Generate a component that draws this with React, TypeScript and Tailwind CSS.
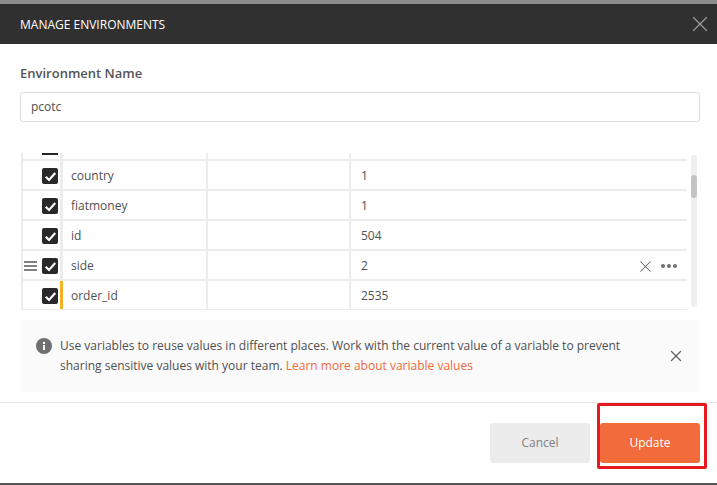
import { X } from 'lucide-react';

const rows = [
  { key: 'country', value: '1' },
  { key: 'fiatmoney', value: '1' },
  { key: 'id', value: '504' },
  { key: 'side', value: '2', hover: true },
  { key: 'order_id', value: '2535', changed: true },
];

function CheckBox() {
  return (
    <span className="flex h-4 w-4 items-center justify-center rounded-[2px] bg-[#282828]">
      <svg width="13" height="13" viewBox="0 0 12 12" fill="none">
        <path d="M1.6 6.2 L4.6 9.2 L10.4 2.8" stroke="#fff" strokeWidth="2" />
      </svg>
    </span>
  );
}

function Row({ name, value, hover, changed }: { name: string; value: string; hover?: boolean; changed?: boolean }) {
  return (
    <div className="flex h-[30px] shrink-0 border-b-2 border-[#ececec] text-[12px] text-[#505050]">
      <div className="flex w-[37px] shrink-0 items-center justify-end pt-[2px] pr-[2px]">
        {hover && (
          <span className="mr-[5px] flex w-[13px] flex-col gap-[2px]">
            <span className="h-[2px] bg-[#808080]" />
            <span className="h-[2px] bg-[#808080]" />
            <span className="h-[2px] bg-[#808080]" />
          </span>
        )}
        <CheckBox />
      </div>
      <div className={`flex w-[148px] shrink-0 items-center border-r-2 border-l-[3px] border-r-[#ececec] pt-[2px] pl-[8px] ${changed ? 'border-l-[#f5b324]' : 'border-l-[#ececec]'}`}>
        {name}
      </div>
      <div className="w-[143px] shrink-0 border-r-2 border-[#ececec]" />
      <div className="flex flex-1 items-center pt-[2px] pl-[10px]">
        <span className="flex-1">{value}</span>
        {hover && (
          <span className="flex items-center pr-[10px]">
            <X size={19} strokeWidth={1.3} className="text-[#606060]" />
            <span className="ml-[6px] flex gap-[2px]">
              <span className="h-[4px] w-[4px] rounded-full bg-[#707070]" />
              <span className="h-[4px] w-[4px] rounded-full bg-[#707070]" />
              <span className="h-[4px] w-[4px] rounded-full bg-[#707070]" />
            </span>
          </span>
        )}
      </div>
    </div>
  );
}

export default function App() {
  return (
    <div className="relative flex h-[485px] w-[717px] flex-col overflow-hidden bg-white font-['Open_Sans',sans-serif]">
      <div className="h-[4px] shrink-0 bg-[#8c8c8c]" />
      <header className="flex h-[40px] shrink-0 items-center justify-between bg-[#303030] pr-[4px] pl-[20px]">
        <h1 className="pt-[1px] text-[12px] font-medium text-white">MANAGE ENVIRONMENTS</h1>
        <X size={26} strokeWidth={1.2} className="text-[#9a9a9a]" />
      </header>

      <main className="flex flex-1 flex-col">
        <div className="pt-[20px] pr-[17px] pl-[20px]">
          <label className="block text-[13px] leading-[18px] font-semibold text-[#555555]">Environment Name</label>
          <div className="mt-[10px] flex h-[30px] items-center rounded-[3px] border border-[#dcdcdc] pl-[10px] text-[12px] text-[#505050]">
            pcotc
          </div>
        </div>

        <div className="mt-[31px] flex h-[157px] shrink-0 overflow-hidden pl-[21px]">
          <div className="w-[666px] shrink-0">
            <div className="flex h-[8px] border-b-2 border-l-2 border-[#ececec]">
              <div className="flex w-[37px] shrink-0 items-start justify-end pr-[2px]">
                <span className="h-[2px] w-4 bg-[#282828]" />
              </div>
              <div className="w-[148px] shrink-0 border-r-2 border-l-[3px] border-r-[#ececec] border-l-[#ececec]" />
              <div className="w-[143px] shrink-0 border-r-2 border-[#ececec]" />
            </div>
            <div className="border-l-2 border-[#ececec]">
              {rows.map((r) => (
                <Row key={r.key} name={r.key} value={r.value} hover={r.hover} changed={r.changed} />
              ))}
            </div>
          </div>
          <div className="mt-[2px] ml-[4px] h-[152px] w-[6px] rounded-full bg-[#efefef] pt-[20px]">
            <div className="h-[23px] w-[6px] rounded-full bg-[#c4c4c4]" />
          </div>
        </div>

        <div className="mt-[10px] mr-[17px] ml-[20px] flex h-[72px] shrink-0 items-center bg-[#fafafa] pr-[15px] pl-[16px]">
          <svg width="16" height="16" viewBox="0 0 16 16" className="mb-[20px] shrink-0">
            <circle cx="8" cy="8" r="8" fill="#707070" />
            <rect x="7" y="7" width="2" height="5" fill="#fff" />
            <rect x="7" y="4" width="2" height="2" fill="#fff" />
          </svg>
          <p className="ml-[8px] flex-1 text-[12px] leading-[20px] text-[#505050]">
            Use variables to reuse values in different places. Work with the current value of a variable to prevent sharing sensitive values with your team.{' '}
            <span className="text-[#f26b3a]">Learn more about variable values</span>
          </p>
          <X size={18} strokeWidth={1.7} className="ml-[12px] shrink-0 text-[#606060]" />
        </div>
      </main>

      <footer className="flex h-[81px] shrink-0 items-start justify-end gap-[10px] border-t border-[#e6e6e6] pt-[20px] pr-[17px]">
        <button className="h-[40px] w-[100px] rounded-[3px] bg-[#ececec] text-[12px] text-[#808080]">Cancel</button>
        <button className="h-[40px] w-[100px] rounded-[3px] bg-[#f26b3a] text-[12px] font-medium text-white">Update</button>
      </footer>
      <div className="h-[2px] shrink-0 bg-[#555555]" />

      <div className="absolute top-[403px] left-[597px] h-[66px] w-[110px] rounded-[2px] border-[3px] border-[#e8191f]" />
    </div>
  );
}
